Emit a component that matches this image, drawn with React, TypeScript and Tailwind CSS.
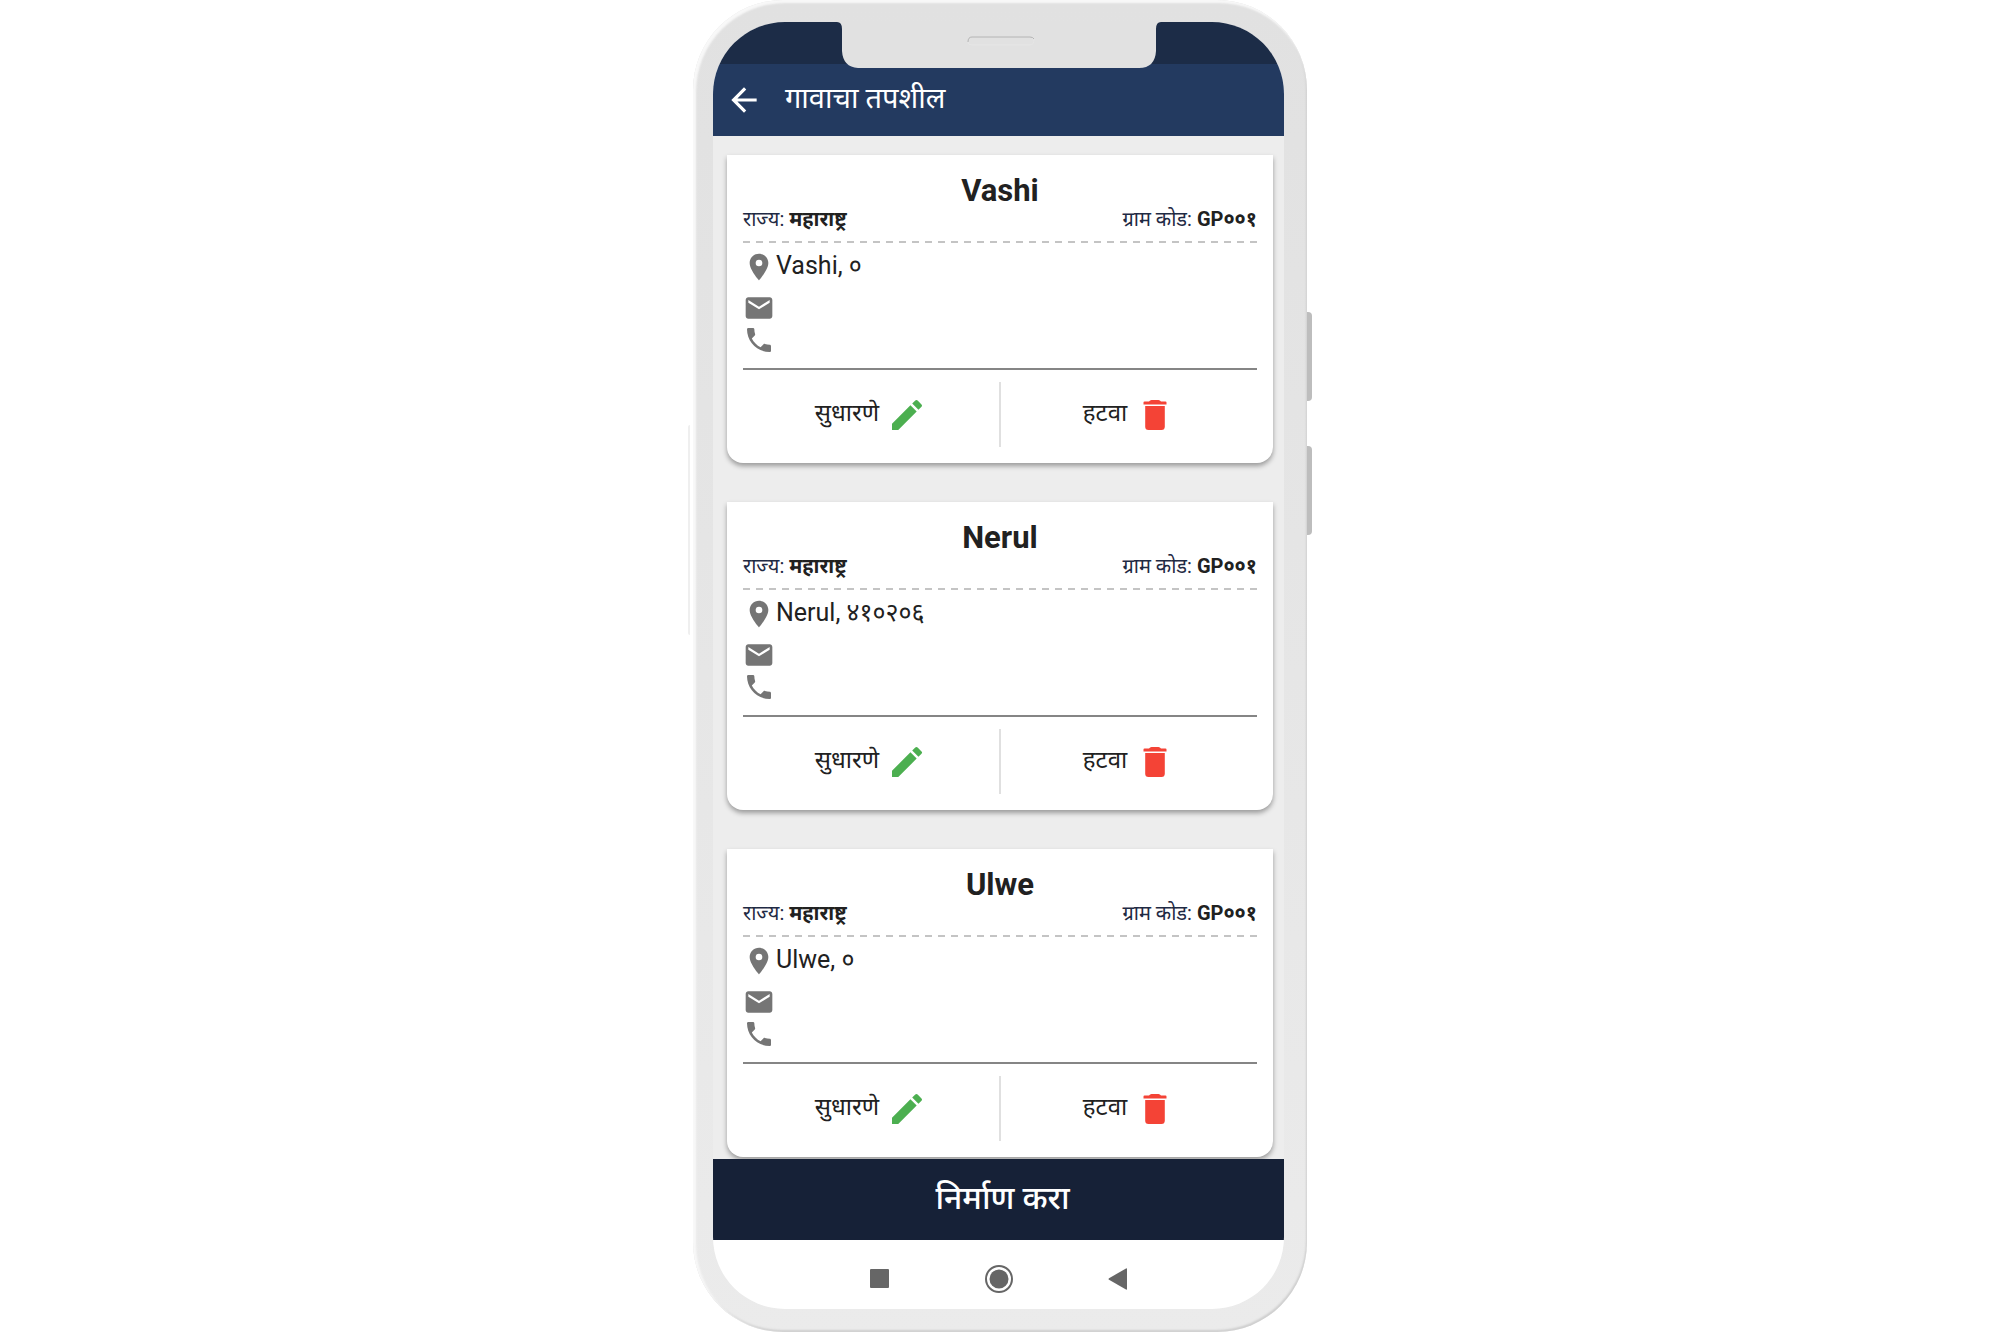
import {
  MdArrowBack,
  MdEdit,
  MdEmail,
  MdLocationOn,
  MdPhone,
} from "react-icons/md";

type Village = { name: string; pin: string };

const villages: Village[] = [
  { name: "Vashi", pin: "०" },
  { name: "Nerul", pin: "४१०२०६" },
  { name: "Ulwe", pin: "०" },
];

function TrashIcon() {
  return (
    <svg className="size-10 text-[#f44336]" viewBox="0 0 40 40" fill="currentColor">
      <path d="M8.500 7.500q0-1 1-1H14q1-1.500 2.500-1.500h7q1.500 0 2.500 1.500h4.500q1 0 1 1v2h-23z" />
      <path d="M10.200 11h19.600v20.500q0 3.500-3.300 3.500h-13q-3.300 0-3.300-3.500z" />
    </svg>
  );
}

function VillageCard({ name, pin }: Village) {
  return (
    <article className="rounded-b-2xl bg-white px-4 pt-5 pb-4 shadow-[0_3px_5px_rgba(0,0,0,0.35)]">
      <h2 className="text-center text-[31px] leading-8 font-bold text-[#212121]">{name}</h2>
      <div className="flex justify-between text-xl leading-6 text-[#1f2a44]">
        <p>
          राज्य: <b className="text-[#212121]">महाराष्ट्र</b>
        </p>
        <p>
          ग्राम कोड: <b className="text-[#212121]">GP००१</b>
        </p>
      </div>
      <div className="mt-[10px] h-[2px] bg-[repeating-linear-gradient(90deg,#c4c4c4_0_7px,transparent_7px_13px)]" />
      <div className="mt-2 flex h-8 items-center text-[#212121]">
        <MdLocationOn className="size-8 shrink-0 text-[#757575]" />
        <span className="pb-0.5 pl-px text-[25px] leading-8">
          {name}, {pin}
        </span>
      </div>
      <MdEmail className="mt-[9px] size-8 text-[#757575]" />
      <MdPhone className="size-8 text-[#757575]" />
      <hr className="mt-3 border-t-2 border-[#858585]" />
      <div className="mt-3 flex h-[65px] text-2xl text-[#212121]">
        <button className="flex flex-1 items-center justify-center gap-2 border-r-2 border-[#e0e0e0] pt-px">
          <span className="pb-1">सुधारणे</span>
          <MdEdit className="size-10 text-[#4caf50]" />
        </button>
        <button className="flex flex-1 items-center justify-center gap-2 pt-px">
          <span className="pb-1">हटवा</span>
          <TrashIcon />
        </button>
      </div>
    </article>
  );
}

export default function App() {
  return (
    <main className="flex min-h-screen justify-center bg-white font-['Roboto','Noto_Sans_Devanagari','Noto_Sans',sans-serif]">
      <div className="relative w-full max-w-[614px] self-start rounded-[90px] bg-linear-to-b from-[#e1e1e1] to-[#ebebeb] pt-[22px] pr-[23px] pb-[23px] pl-5 shadow-[inset_2px_2px_2px_1px_#f8f8f8,inset_-1px_-2px_2px_#cfcfcf]">
        <div className="absolute top-[312px] -right-[5px] h-[89px] w-[5px] rounded-r bg-[#bdbdbd]" />
        <div className="absolute top-[446px] -right-[5px] h-[89px] w-[5px] rounded-r bg-[#bdbdbd]" />
        <div className="absolute top-[425px] -left-[5px] h-[210px] w-[2px] rounded-l bg-[#efefef]" />
        <div className="overflow-hidden rounded-[72px] bg-white">
          <div className="h-[42px] bg-[#1c2c47]" />
          <header className="flex h-[72px] items-center bg-[#233a60] pl-3 text-white">
            <button aria-label="Back">
              <MdArrowBack className="size-[38px]" />
            </button>
            <h1 className="ml-[22px] pb-1 text-[29px] leading-9">गावाचा तपशील</h1>
          </header>
          <section className="flex flex-col gap-[39px] bg-[#ededed] pt-[19px] pr-[11px] pb-0.5 pl-[14px]">
            {villages.map((v) => (
              <VillageCard key={v.name} {...v} />
            ))}
          </section>
          <button className="relative block h-[81px] w-full bg-[#162137] pb-1 pl-2 text-[32px] font-medium text-white">
            निर्माण करा
          </button>
          <nav className="flex h-[69px] items-center justify-center gap-[91px] pt-2 text-[#666666]">
            <button aria-label="Recent apps">
              <svg className="size-7" viewBox="0 0 28 28" fill="currentColor">
                <rect x="4" y="4" width="19" height="19" rx="1" />
              </svg>
            </button>
            <button aria-label="Home">
              <svg className="size-7" viewBox="0 0 28 28" fill="currentColor">
                <circle cx="14" cy="14" r="9.5" />
                <circle cx="14" cy="14" r="13" fill="none" stroke="currentColor" strokeWidth="2" />
              </svg>
            </button>
            <button aria-label="Previous">
              <svg className="size-7" viewBox="0 0 28 28" fill="currentColor">
                <path d="M5 13.2 22 3.500q1-.5 1 .5v20q0 1-1 .5L5 14.800q-1-.8 0-1.600z" />
              </svg>
            </button>
          </nav>
        </div>
        <svg
          className="absolute top-[21px] left-1/2 h-[47px] w-[328px] -translate-x-1/2"
          viewBox="0 0 328 47"
          fill="#e1e1e1"
        >
          <path d="M0 0h328v1h-3q-5 0-5 7v22q-1 17-17 17H22Q7 46 6 30V8Q6 1 1 1H0z" />
          <path d="M132 21q0-5 4-5h58q3 0 4 2" fill="none" stroke="#b4b4b4" strokeWidth="1" />
          <path d="M132 21q0 3 4 3h58q4 0 4-6" fill="none" stroke="#e6e6e6" strokeWidth="1" />
        </svg>
      </div>
    </main>
  );
}
